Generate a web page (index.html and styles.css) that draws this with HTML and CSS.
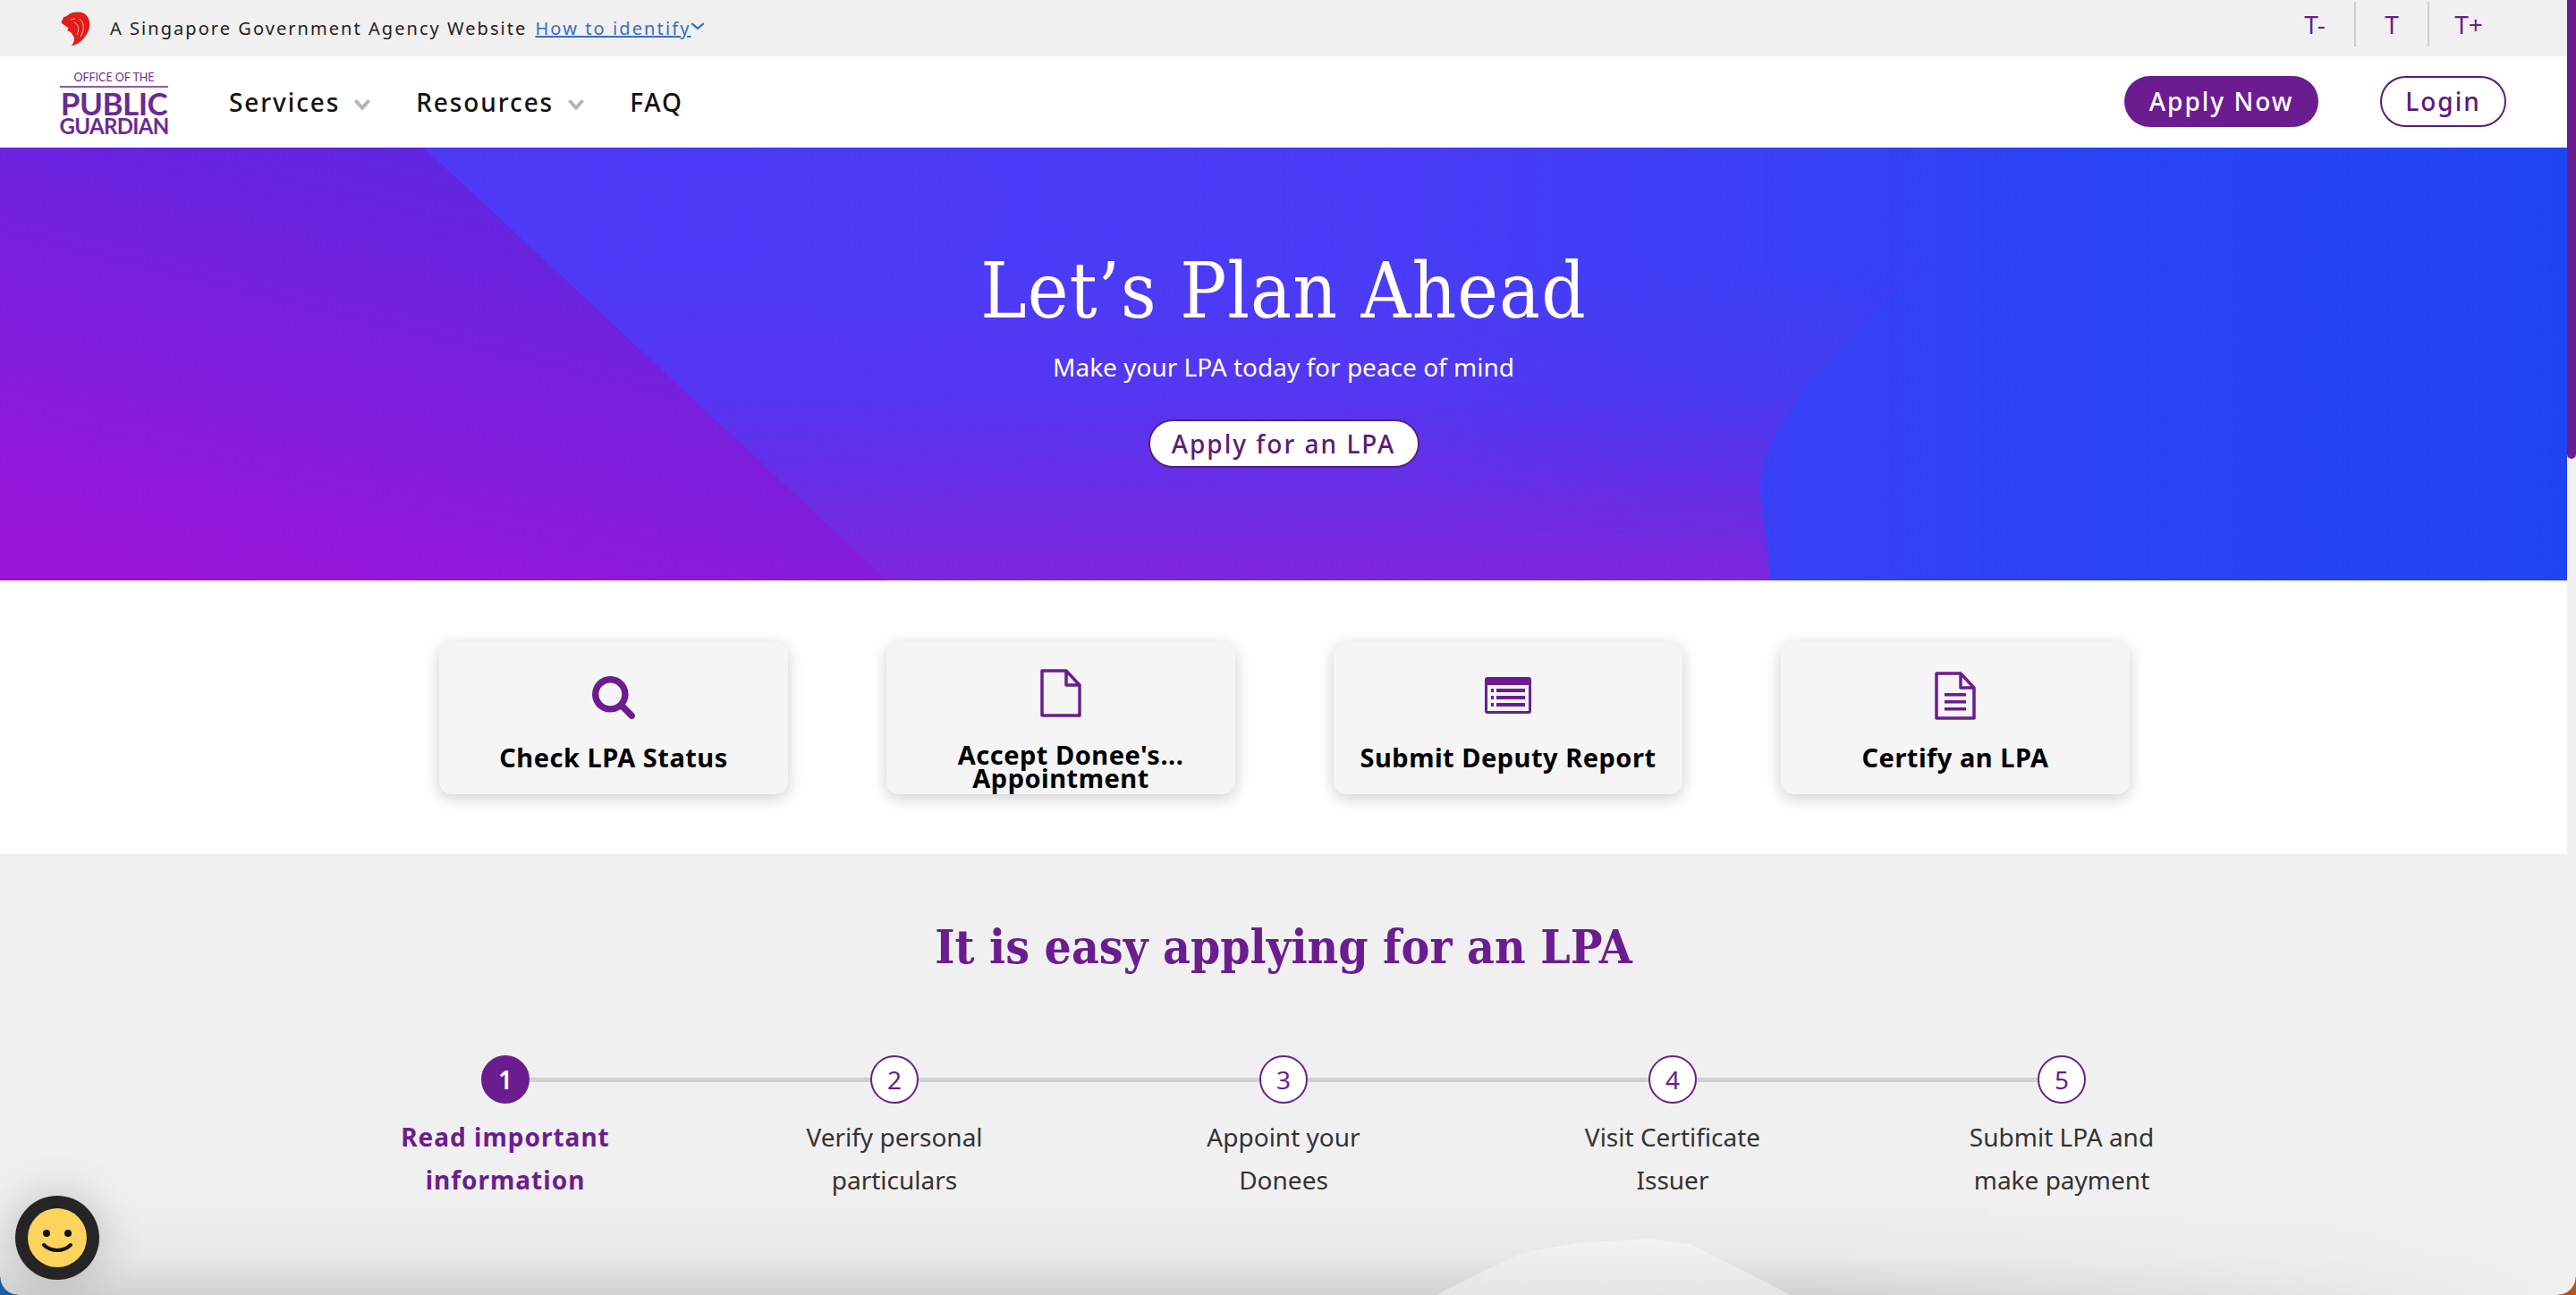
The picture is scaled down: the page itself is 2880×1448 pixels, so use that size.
FILE: index.html
```html
<!DOCTYPE html>
<html lang="en">
<head>
  <meta charset="utf-8">
  <title>Office of the Public Guardian</title>
  <link rel="stylesheet" href="styles.css">
</head>
<body>
  <div class="page">
    <div class="masthead">
      <svg class="lion" viewBox="0 0 32 38">
        <path fill="#e31b1b" d="M8 3C13 0 20 0 25 2c5 3 7 9 6 15-1 8-7 14-12 18-3 2-6 3-8 3 1-2 3-4 3-7 0-3-2-5-4-8-1-1-3-1-4-2 1-1 2-2 1-3L0 13c-1-2 0-3 1-4l1-3c2 0 4-1 6-3z"/>
        <path fill="none" stroke="#fff" stroke-width="1" opacity=".7" d="M14 12c5 2 6 8 3 14M20 8c5 4 6 12 1 20M10 9l5-1"/>
      </svg>
      <span class="masthead-text">A Singapore Government Agency Website</span>
      <a class="identify">How to identify</a>
      <svg class="identify-chev" viewBox="0 0 14 8"><path d="M1 1l6 5 6-5" fill="none" stroke="#3b6cc4" stroke-width="2"/></svg>
      <div class="text-size">
        <span class="size-btn">T-</span>
        <span class="size-btn size-mid">T</span>
        <span class="size-btn">T+</span>
      </div>
    </div>

    <nav class="nav">
      <div class="logo">
        <span class="logo-office">OFFICE OF THE</span>
        <span class="logo-public">PUBLIC</span>
        <span class="logo-guardian">GUARDIAN</span>
      </div>
      <a class="nav-link">Services<svg class="nav-chev" viewBox="0 0 18 12"><path d="M2 2l7 8 7-8" fill="none" stroke="#b4b4b4" stroke-width="3.500"/></svg></a>
      <a class="nav-link">Resources<svg class="nav-chev" viewBox="0 0 18 12"><path d="M2 2l7 8 7-8" fill="none" stroke="#b4b4b4" stroke-width="3.500"/></svg></a>
      <a class="nav-link">FAQ</a>
      <a class="btn btn-solid">Apply Now</a>
      <a class="btn btn-line">Login</a>
    </nav>

    <section class="hero">
      <svg class="hero-bg" viewBox="0 0 2870 484" preserveAspectRatio="none">
        <defs>
          <linearGradient id="base" gradientUnits="userSpaceOnUse" x1="0" y1="0" x2="2870" y2="0">
            <stop offset="0" stop-color="#5138f5"/>
            <stop offset=".55" stop-color="#4a3cf6"/>
            <stop offset=".8" stop-color="#2c43f3"/>
            <stop offset="1" stop-color="#1f45f2"/>
          </linearGradient>
          <linearGradient id="rise" x1="0" y1="0" x2=".05" y2="1">
            <stop offset=".3" stop-color="#7c24dc" stop-opacity="0"/>
            <stop offset=".6" stop-color="#7c24dc" stop-opacity=".2"/>
            <stop offset="1" stop-color="#8026dc" stop-opacity=".95"/>
          </linearGradient>
          <linearGradient id="side" x1=".7" y1="0" x2=".2" y2="1">
            <stop offset="0" stop-color="#5a28e2"/>
            <stop offset="1" stop-color="#9a16d8"/>
          </linearGradient>
        </defs>
        <rect width="2870" height="484" fill="url(#base)"/>
        <rect width="2870" height="484" fill="url(#rise)"/>
        <path fill="url(#base)" d="M1978 484C1978 430 1960 390 1972 350 2010 240 2180 100 2380 0L2870 0 2870 484Z"/>
        <path fill="url(#side)" d="M0 0L474 0 992 484 0 484Z"/>
      </svg>
      <h1 class="hero-title">Let’s Plan Ahead</h1>
      <p class="hero-sub">Make your LPA today for peace of mind</p>
      <a class="btn btn-hero">Apply for an LPA</a>
    </section>

    <section class="quick">
      <div class="card">
        <div class="card-icon">
          <svg class="ico-search" viewBox="0 0 1664 1664"><path fill="#6b1d8f" d="M1152 704q0-185-131.500-316.500t-316.500-131.500-316.500 131.500-131.500 316.500 131.500 316.500 316.500 131.500 316.500-131.500 131.500-316.500zm512 832q0 52-38 90t-90 38q-54 0-90-38l-343-342q-179 124-399 124-143 0-273.500-55.500t-225-150-150-225-55.500-273.500 55.500-273.500 150-225 225-150 273.500-55.500 273.500 55.500 225 150 150 225 55.500 273.500q0 220-124 399l343 343q37 37 37 90z"/></svg>
        </div>
        <div class="card-label">Check LPA Status</div>
      </div>
      <div class="card">
        <div class="card-icon">
          <svg class="ico-doc" viewBox="0 0 46 54"><path fill="none" stroke="#6b1d8f" stroke-width="3.500" stroke-linejoin="round" d="M2 2h27l15 16v34H2zM29 2v16h15"/></svg>
        </div>
        <div class="card-label card-label-two"><span class="overhang">Accept Donee's...</span><br>Appointment</div>
      </div>
      <div class="card">
        <div class="card-icon">
          <svg class="ico-form" viewBox="0 0 52 41">
            <rect width="52" height="41" rx="3" fill="#6b1d8f"/>
            <rect x="3" y="9" width="46" height="29" fill="#f4f4f4"/>
            <path fill="#6b1d8f" d="M7 13h3v4H7zM13 13h32v4H13zM7 21h3v4H7zM13 21h32v4H13zM7 29h3v4H7zM13 29h32v4H13z"/>
          </svg>
        </div>
        <div class="card-label">Submit Deputy Report</div>
      </div>
      <div class="card">
        <div class="card-icon">
          <svg class="ico-cert" viewBox="0 0 46 54">
            <path fill="none" stroke="#6b1d8f" stroke-width="3.500" stroke-linejoin="round" d="M2 2h27l15 16v34H2zM29 2v16h15"/>
            <path fill="#6b1d8f" d="M11 24h24v3.500H11zM11 32h24v3.500H11zM11 40h24v3.500H11z"/>
          </svg>
        </div>
        <div class="card-label">Certify an LPA</div>
      </div>
    </section>

    <section class="steps-wrap">
      <h2 class="steps-title">It is easy applying for an LPA</h2>
      <div class="steps">
        <div class="step step-active">
          <span class="step-num">1</span>
          <p class="step-text">Read important<br>information</p>
        </div>
        <div class="step">
          <span class="step-num">2</span>
          <p class="step-text">Verify personal<br>particulars</p>
        </div>
        <div class="step">
          <span class="step-num">3</span>
          <p class="step-text">Appoint your<br>Donees</p>
        </div>
        <div class="step">
          <span class="step-num">4</span>
          <p class="step-text">Visit Certificate<br>Issuer</p>
        </div>
        <div class="step">
          <span class="step-num">5</span>
          <p class="step-text">Submit LPA and<br>make payment</p>
        </div>
      </div>
      <div class="bottom-fade"></div>
      <div class="hump"></div>
    </section>
  </div>

  <div class="scrollbar"><div class="scroll-thumb"></div></div>

  <div class="smiley">
    <svg viewBox="0 0 94 94">
      <circle cx="47" cy="47" r="47" fill="#252525"/>
      <circle cx="47" cy="47" r="33" fill="#fbd45e"/>
      <circle cx="35" cy="42" r="4" fill="#111"/>
      <circle cx="59" cy="42" r="4" fill="#111"/>
      <path d="M32 55c8 8 22 8 30 0" fill="none" stroke="#111" stroke-width="4" stroke-linecap="round"/>
    </svg>
  </div>

  <div class="corner corner-left"></div>
  <div class="corner corner-right"></div>
</body>
</html>
```

FILE: styles.css
```css
html, body {
  margin: 0;
  padding: 0;
  height: 1448px;
  overflow: hidden;
}
body {
  display: flex;
  position: relative;
  font-family: "Noto Sans", "Open Sans", sans-serif;
  color: #333;
  background: #f0f0f0;
}
p, h1, h2 {
  margin: 0;
}
.page {
  width: 2870px;
  flex: none;
}

/* scrollbar strip */
.scrollbar {
  width: 10px;
  flex: none;
  background: #f0f0f0;
}
.scroll-thumb {
  height: 513px;
  background: #6b1d8f;
  border-radius: 0 0 5px 5px;
}

/* masthead */
.masthead {
  height: 63px;
  display: flex;
  align-items: center;
  background: #f0f0f0;
  padding-left: 68px;
  box-sizing: border-box;
}
.lion {
  width: 34px;
  height: 38px;
  margin-right: 21px;
}
.masthead-text {
  font-size: 20px;
  letter-spacing: 2.05px;
  color: #222;
}
.identify {
  font-size: 20px;
  letter-spacing: 2.1px;
  color: #3b6cc4;
  text-decoration: underline;
  margin-left: 9px;
}
.identify-chev {
  width: 16px;
  height: 9px;
  margin: 0 0 4px 0;
}
.text-size {
  margin-left: auto;
  margin-right: 66px;
  display: flex;
  height: 50px;
  margin-top: -10px;
}
.size-btn {
  width: 88px;
  display: flex;
  align-items: center;
  justify-content: center;
  font-size: 28px;
  color: #6b1d8f;
}
.size-mid {
  width: 80px;
  border-left: 2px solid #ccc;
  border-right: 2px solid #ccc;
}

/* nav */
.nav {
  height: 102px;
  display: flex;
  align-items: center;
  background: #fff;
  padding: 0 68px 0 67px;
  box-sizing: border-box;
}
.logo {
  width: 121px;
  margin-right: 68px;
  display: flex;
  flex-direction: column;
  align-items: center;
  color: #6b2a93;
  font-family: "Lato", sans-serif;
  margin-top: 2px;
}
.logo-office {
  font-size: 12.500px;
  line-height: 14px;
  width: 100%;
  text-align: center;
  border-bottom: 2px solid #8e5aa8;
  padding-bottom: 2px;
}
.logo-public {
  font-size: 35px;
  line-height: 29px;
  font-weight: 700;
  letter-spacing: -.5px;
  margin-top: 3px;
}
.logo-guardian {
  font-size: 24px;
  line-height: 21px;
  font-weight: 700;
  letter-spacing: -.7px;
}
.nav-link {
  display: flex;
  align-items: center;
  font-size: 28px;
  font-weight: 500;
  letter-spacing: 1.9px;
  color: #111;
  margin-right: 50px;
}
.nav-chev {
  width: 20px;
  height: 13px;
  margin: 4px 0 0 15px;
}
.btn {
  display: flex;
  align-items: center;
  justify-content: center;
  box-sizing: border-box;
  border-radius: 29px;
  font-size: 28px;
  font-weight: 500;
  letter-spacing: 2px;
  height: 57px;
}
.btn-solid {
  width: 217px;
  margin-left: auto;
  margin-bottom: 2px;
  background: #6b1d8f;
  color: #fff;
}
.btn-line {
  width: 141px;
  margin-left: 69px;
  margin-bottom: 2px;
  background: #fff;
  border: 2px solid #5b1b7b;
  color: #5b1b7b;
}

/* hero */
.hero {
  height: 484px;
  position: relative;
  display: flex;
  flex-direction: column;
  align-items: center;
  color: #fff;
}
.hero-bg {
  position: absolute;
  left: 0;
  top: 0;
  width: 100%;
  height: 100%;
}
.hero-title, .hero-sub, .btn-hero {
  position: relative;
}
.hero-title {
  font-family: "DejaVu Serif Condensed", "DejaVu Serif", serif;
  font-stretch: condensed;
  font-weight: 400;
  font-size: 86px;
  line-height: 100px;
  margin-top: 110px;
  letter-spacing: 1px;
}
.hero-sub {
  font-size: 28px;
  line-height: 40px;
  margin-top: 15px;
}
.btn-hero {
  width: 303px;
  height: 54px;
  margin-top: 39px;
  background: #fff;
  border: 2px solid #5b1b7b;
  color: #5b1b7b;
}

/* quick links */
.quick {
  height: 306px;
  background: #fff;
  display: flex;
  justify-content: center;
  gap: 110px;
  padding: 69px 0 0 2px;
  box-sizing: border-box;
}
.card {
  width: 390px;
  height: 170px;
  background: #f5f5f5;
  border-radius: 14px;
  box-shadow: 0 4px 18px rgba(0, 0, 0, .2);
  overflow: hidden;
  text-align: center;
  padding-top: 30px;
  box-sizing: border-box;
}
.card-icon {
  height: 60px;
  display: flex;
  align-items: center;
  justify-content: center;
}
.ico-search { width: 48px; height: 48px; margin-top: 4px; }
.ico-doc { width: 46px; height: 54px; margin-top: -6px; }
.ico-form { width: 52px; height: 41px; margin-top: -2px; }
.ico-cert { width: 46px; height: 54px; }
.card-label {
  margin-top: 19px;
  font-size: 29px;
  font-weight: 700;
  letter-spacing: .5px;
  line-height: 40px;
  color: #000;
}
.card-label-two {
  line-height: 26px;
  margin-top: 23px;
}
.overhang {
  padding-left: 22px;
}

/* steps */
.steps-wrap {
  height: 493px;
  background: #f0f0f0;
  position: relative;
  overflow: hidden;
}
.steps-title {
  font-family: "DejaVu Serif Condensed", "DejaVu Serif", serif;
  font-stretch: condensed;
  font-weight: 700;
  font-size: 53px;
  line-height: 70px;
  text-align: center;
  color: #6b1d8f;
  padding-top: 68px;
}
.steps {
  display: grid;
  grid-template-columns: repeat(5, 435px);
  justify-content: center;
  margin-top: 87px;
  position: relative;
}
.step {
  display: flex;
  flex-direction: column;
  align-items: center;
  position: relative;
}
.step:not(:last-child)::after {
  content: "";
  position: absolute;
  left: 50%;
  width: 100%;
  top: 25px;
  height: 5px;
  background: #d0d0d0;
}
.step-num {
  width: 54px;
  height: 54px;
  box-sizing: border-box;
  border-radius: 50%;
  border: 2px solid #6b1d8f;
  background: #fff;
  color: #6b1d8f;
  font-size: 28px;
  display: flex;
  align-items: center;
  justify-content: center;
  position: relative;
  z-index: 1;
}
.step-text {
  margin-top: 13px;
  font-size: 28px;
  line-height: 48px;
  text-align: center;
  color: #333;
}
.step-active .step-num {
  background: #6b1d8f;
  color: #fff;
  font-weight: 600;
}
.step-active .step-text {
  color: #6b1d8f;
  font-weight: 700;
  letter-spacing: 1px;
}
.bottom-fade {
  position: absolute;
  left: 0;
  right: 0;
  bottom: 0;
  height: 110px;
  background: linear-gradient(to bottom, rgba(0, 0, 0, 0), rgba(0, 0, 0, .03) 60%, rgba(0, 0, 0, .12));
  -webkit-mask-image: linear-gradient(to right, #000 70%, transparent);
  mask-image: linear-gradient(to right, #000 70%, transparent);
}
.hump {
  position: absolute;
  left: 1605px;
  width: 397px;
  bottom: 0;
  height: 63px;
  background: linear-gradient(to bottom, #f3f3f3, #e5e5e5);
  clip-path: polygon(0 100%, 24% 26%, 40% 8%, 60% 0, 72% 10%, 100% 100%);
}

/* floating bits */
.smiley {
  position: absolute;
  left: 17px;
  top: 1337px;
  width: 94px;
  height: 94px;
  border-radius: 50%;
  box-shadow: 0 0 50px rgba(0, 0, 0, .22);
}
.smiley svg {
  display: block;
}
.corner {
  position: absolute;
  bottom: 0;
  width: 20px;
  height: 20px;
}
.corner-left {
  left: 0;
  background: radial-gradient(circle at 100% 0, transparent 19px, #1b5f9e 20px);
}
.corner-right {
  right: 0;
  background: radial-gradient(circle at 0 0, transparent 19px, #b9531a 20px);
}
```
